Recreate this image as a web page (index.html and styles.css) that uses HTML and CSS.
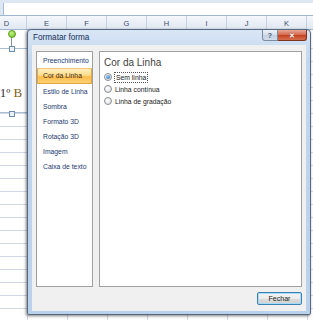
FILE: index.html
```html
<!DOCTYPE html>
<html lang="pt">
  <head>
    <meta charset="UTF-8" />
    <title>Formatar forma</title>
    <link rel="stylesheet" href="styles.css">
  </head>
  <body>
    <div class="sheet">
      <div class="formula-bar"><div class="formula-input"></div></div>
      <div class="col-heads">
        <div class="col">D</div>
        <div class="col">E</div>
        <div class="col">F</div>
        <div class="col">G</div>
        <div class="col">H</div>
        <div class="col">I</div>
        <div class="col">J</div>
        <div class="col">K</div>
        <div class="col"></div>
      </div>
      <div class="grid">
        <div class="row first"></div>
        <div class="row"></div><div class="row"></div><div class="row"></div>
        <div class="row"></div><div class="row"></div><div class="row"></div>
        <div class="row"></div><div class="row"></div><div class="row"></div>
        <div class="row"></div><div class="row"></div><div class="row"></div>
        <div class="row"></div><div class="row"></div><div class="row"></div>
        <div class="row"></div><div class="row"></div><div class="row"></div>
        <div class="row"></div><div class="row"></div><div class="row"></div>
      </div>

      <!-- caixa de texto selecionada -->
      <div class="shape">
        <span class="shape-text">1º <b>B</b></span>
      </div>
      <div class="rot-line"></div>
      <div class="rot-handle"></div>
      <div class="handle top"></div>
      <div class="handle bottom"></div>

      <div class="dialog">
        <div class="titlebar">
          <span class="title">Formatar forma</span>
          <span class="btn-help">?</span>
          <span class="btn-close">✕</span>
        </div>
        <div class="client">
          <div class="panes">
            <ul class="nav">
              <li>Preenchimento</li>
              <li class="active">Cor da Linha</li>
              <li>Estilo de Linha</li>
              <li>Sombra</li>
              <li>Formato 3D</li>
              <li>Rotação 3D</li>
              <li>Imagem</li>
              <li>Caixa de texto</li>
            </ul>
            <div class="page">
              <h3>Cor da Linha</h3>
              <div class="opt"><span class="radio on"></span><span class="focus">Sem linha</span></div>
              <div class="opt"><span class="radio"></span><span>Linha contínua</span></div>
              <div class="opt"><span class="radio"></span><span>Linha de gradação</span></div>
            </div>
          </div>
          <div class="footer">
            <button class="btn">Fechar</button>
          </div>
        </div>
      </div>
    </div>
  </body>
</html>
```

FILE: styles.css
```css
body {
  margin: 0;
  font-family: "Liberation Sans", Arial, sans-serif;
  overflow: hidden;
}
.sheet {
  position: relative;
  width: 313px;
  height: 320px;
  overflow: hidden;
  background: #fff;
}
.formula-bar {
  height: 15px;
  padding-top: 3px;
  box-sizing: border-box;
  background: #dde7f4;
}
.formula-input {
  height: 12px;
  margin-left: 3px;
  background: #fff;
  border-left: 1px solid #a9bdd6;
}
.col-heads {
  display: flex;
  margin-left: -13px;
  height: 13px;
  border-top: 1px solid #9eb6ce;
  border-bottom: 1px solid #9eb6ce;
  background: linear-gradient(#f4f7fb, #e1e8f2);
}
.col {
  flex: none;
  width: 39px;
  border-right: 1px solid #c3cfdf;
  text-align: center;
  font-size: 7.5px;
  line-height: 15px;
  color: #3b4f69;
}
.grid {
  background-image: linear-gradient(to right, #d0d7e5 1px, transparent 1px);
  background-size: 40px 100%;
  background-position: 27px 0;
}
.row {
  height: 12px;
  border-bottom: 1px solid #d0d7e5;
}
.row.first {
  height: 18px;
}
.shape {
  position: absolute;
  left: -19px;
  top: 48px;
  width: 60px;
  height: 65px;
  box-sizing: border-box;
  border: 1px solid #a9bdd4;
  background: #fff;
  display: flex;
  align-items: center;
  justify-content: center;
}
.shape-text {
  font-family: "Liberation Serif", "Times New Roman", serif;
  font-size: 13px;
  color: #333;
  margin-top: 24px;
}
.shape-text b {
  font-weight: normal;
  color: #7d5f16;
}
.rot-line {
  position: absolute;
  left: 11px;
  top: 36px;
  width: 1px;
  height: 12px;
  background: #7f95b0;
}
.rot-handle {
  position: absolute;
  left: 8px;
  top: 30px;
  width: 6px;
  height: 6px;
  border-radius: 50%;
  border: 1px solid #5c9b1e;
  background: radial-gradient(circle at 40% 35%, #c6f28a, #69c11c);
}
.handle {
  position: absolute;
  left: 9px;
  width: 4px;
  height: 4px;
  border: 1px solid #6d8db4;
  background: #e9f1fb;
}
.handle.top { top: 46px; }
.handle.bottom { top: 111px; }

/* janela do diálogo */
.dialog {
  position: absolute;
  left: 27px;
  top: 29px;
  width: 284px;
  height: 286px;
  box-sizing: border-box;
  padding: 0 4px 3px;
  border: 1px solid #56687f;
  border-radius: 4px 4px 2px 2px;
  background: linear-gradient(#d9e6f5, #c2d7ef 30px, #bad1ec);
  box-shadow: -1px 1px 3px rgba(0, 0, 0, 0.5);
  display: flex;
  flex-direction: column;
}
.titlebar {
  display: flex;
  height: 15px;
  margin: 0 -4px;
}
.title {
  padding-left: 5px;
  font-size: 8.2px;
  line-height: 16px;
  color: #15305a;
}
.btn-help,
.btn-close {
  height: 11px;
  box-sizing: border-box;
  text-align: center;
  font-size: 7px;
  line-height: 11px;
}
.btn-help {
  margin-left: auto;
  width: 16px;
  border: 1px solid #7b8ba1;
  border-top: none;
  border-radius: 0 0 0 3px;
  background: linear-gradient(#eef2f8, #d3dde9 50%, #c3d0e0 51%, #d2dde9);
  color: #4a5a70;
  font-weight: bold;
}
.btn-close {
  width: 29px;
  margin-right: 3px;
  border: 1px solid #83311f;
  border-top: none;
  border-left: none;
  border-radius: 0 0 3px 0;
  background: linear-gradient(#e9a897, #d4664c 50%, #c4401f 51%, #d6704f);
  color: #fff;
  font-weight: bold;
  text-shadow: 0 0 1px #5a1a0c;
}
.client {
  flex: 1;
  display: flex;
  flex-direction: column;
  padding: 6px 4px;
  background: #f0f0f0;
}
.panes {
  display: flex;
  gap: 6px;
  height: 236px;
}
.nav {
  width: 57px;
  box-sizing: border-box;
  margin: 0;
  padding: 1px 0 0;
  list-style: none;
  background: #fff;
  border: 1px solid #a0a0a0;
}
.nav li {
  height: 15px;
  padding-left: 6px;
  font-size: 6.8px;
  line-height: 15px;
  color: #1c3a70;
  white-space: nowrap;
}
.nav li.active {
  height: 14px;
  line-height: 14px;
  padding-left: 5px;
  border: 1px solid #e3a53c;
  border-top-color: #f3c878;
  border-radius: 1px;
  background: linear-gradient(#fff0c0, #fedc8c 45%, #fcbc4c 55%, #fdd074);
  color: #3a2a18;
}
.page {
  flex: 1;
  box-sizing: border-box;
  padding: 5px 4px;
  background: #fff;
  border: 1px solid #a0a0a0;
}
.page h3 {
  margin: 0 0 2px;
  font-size: 10px;
  font-weight: normal;
  line-height: 12px;
  color: #3f3f3f;
}
.opt {
  display: flex;
  align-items: center;
  height: 12px;
  font-size: 6.8px;
  color: #222;
}
.radio {
  position: relative;
  width: 8px;
  height: 8px;
  box-sizing: border-box;
  margin-right: 3px;
  border-radius: 50%;
  border: 1px solid #8a8d92;
  background: radial-gradient(circle at 40% 35%, #fff, #dadcdf);
}
.radio.on::after {
  content: "";
  position: absolute;
  left: 1px;
  top: 1px;
  width: 4px;
  height: 4px;
  border-radius: 50%;
  background: radial-gradient(circle at 40% 35%, #8fd0f5, #1e5aa5);
}
.focus {
  outline: 1px dotted #555;
  padding: 0 1px;
  line-height: 9px;
}
.footer {
  display: flex;
  justify-content: flex-end;
  margin-top: 5px;
}
.btn {
  width: 45px;
  height: 13px;
  padding: 0;
  border: 1px solid #3c7fb1;
  border-radius: 2px;
  background: linear-gradient(#f4f4f4, #ececec 50%, #dcdcdc 51%, #d2d2d2);
  box-shadow: inset 0 0 0 1px #a6dcf7;
  font-family: "Liberation Sans", Arial, sans-serif;
  font-size: 7px;
  color: #222;
}
```
